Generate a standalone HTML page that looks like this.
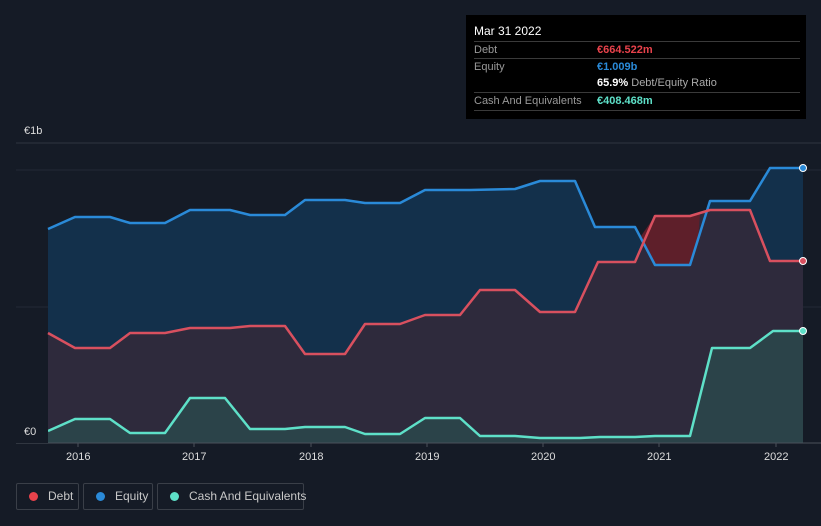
<!DOCTYPE html>
<html><head><style>
body{margin:0;width:821px;height:526px;background:#151b26;font-family:"Liberation Sans",sans-serif;overflow:hidden;position:relative}
.tt{position:absolute;left:466px;top:15px;width:340px;height:104px;background:#000;color:#fff;font-size:11px}
.row{position:absolute;left:8px;width:326px;border-top:1px solid #3a3a3a;height:17px;line-height:17px}
.l{color:#999;position:absolute;left:0}
.v{position:absolute;left:123px;font-weight:bold}
.leg{position:absolute;top:483px;height:27px;border:1px solid #3a3f48;border-radius:2px;color:#c8c8c8;font-size:12px;line-height:25px;box-sizing:border-box;white-space:nowrap}
.leg i{display:inline-block;width:9px;height:9px;border-radius:50%;margin:0 10px 0 12px;vertical-align:-1px}
.ax{position:absolute;top:451px;color:#ddd;font-size:11px}
</style></head><body>
<svg width="821" height="526" style="position:absolute;left:0;top:0">
<line x1="16" y1="143" x2="821" y2="143" stroke="#2f3540"/>
<line x1="16" y1="170" x2="821" y2="170" stroke="#242a35"/>
<line x1="16" y1="307" x2="821" y2="307" stroke="#242a35"/>
<polygon fill="#13304b" points="48,229 75,217 110,217 130,223 165,223 190,210 230,210 250,215 285,215 305,200 345,200 365,203 400,203 425,190 470,190 515,189 540,181 575,181 595,227 635,227 655,265 690,265 710,201 750,201 770,168 803,168 803,443 48,443"/>
<polygon fill="#2e2a3c" points="48,333 75,348 110,348 130,333 165,333 190,328 230,328 250,326 285,326 305,354 345,354 365,324 400,324 425,315 460,315 480,290 515,290 540,312 575,312 598,262 635,262 655,216 690,216 710,210 750,210 770,261 803,261 803,443 48,443"/>
<polygon fill="#5e1f2a" points="641,236 655,216 690,216 700,214 698,240 690,265 655,265"/>
<polygon fill="#2b4349" points="48,431 75,419 110,419 130,433 165,433 190,398 225,398 250,429 285,429 305,427 345,427 365,434 400,434 425,418 460,418 480,436 515,436 540,438 580,438 600,437 635,437 655,436 690,436 712,348 750,348 773,331 803,331 803,443 48,443"/>
<g fill="none" stroke-width="2.5" stroke-linejoin="round">
<polyline stroke="#2a8ad8" points="48,229 75,217 110,217 130,223 165,223 190,210 230,210 250,215 285,215 305,200 345,200 365,203 400,203 425,190 470,190 515,189 540,181 575,181 595,227 635,227 655,265 690,265 710,201 750,201 770,168 803,168"/>
<polyline stroke="#d8505f" points="48,333 75,348 110,348 130,333 165,333 190,328 230,328 250,326 285,326 305,354 345,354 365,324 400,324 425,315 460,315 480,290 515,290 540,312 575,312 598,262 635,262 655,216 690,216 710,210 750,210 770,261 803,261"/>
<polyline stroke="#5ee0c8" points="48,431 75,419 110,419 130,433 165,433 190,398 225,398 250,429 285,429 305,427 345,427 365,434 400,434 425,418 460,418 480,436 515,436 540,438 580,438 600,437 635,437 655,436 690,436 712,348 750,348 773,331 803,331"/>
</g>
<circle cx="803" cy="168" r="3.5" fill="#2a8ad8" stroke="#fff"/>
<circle cx="803" cy="261" r="3.5" fill="#d8505f" stroke="#fff"/>
<circle cx="803" cy="331" r="3.5" fill="#5ee0c8" stroke="#fff"/>
<line x1="16" y1="443" x2="821" y2="443" stroke="#4a505a"/>
<g stroke="#4a505a"><line x1="78" y1="443" x2="78" y2="447"/><line x1="194" y1="443" x2="194" y2="447"/><line x1="311" y1="443" x2="311" y2="447"/><line x1="427" y1="443" x2="427" y2="447"/><line x1="543" y1="443" x2="543" y2="447"/><line x1="659" y1="443" x2="659" y2="447"/><line x1="776" y1="443" x2="776" y2="447"/></g>
</svg>
<div style="position:absolute;left:16px;top:424px;width:32px;height:19px;background:#151b26"></div>
<div style="position:absolute;left:24px;top:125px;color:#ddd;font-size:11px">€1b</div>
<div style="position:absolute;left:24px;top:426px;color:#ddd;font-size:11px">€0</div>
<div class="ax" style="left:66px">2016</div><div class="ax" style="left:182px">2017</div><div class="ax" style="left:299px">2018</div><div class="ax" style="left:415px">2019</div><div class="ax" style="left:531px">2020</div><div class="ax" style="left:647px">2021</div><div class="ax" style="left:764px">2022</div>
<div class="tt">
<div style="position:absolute;left:8px;top:9px;font-size:12px">Mar 31 2022</div>
<div class="row" style="top:26px"><span class="l">Debt</span><span class="v" style="color:#e8424b">€664.522m</span></div>
<div class="row" style="top:43px"><span class="l">Equity</span><span class="v" style="color:#2a8ad8">€1.009b</span></div>
<div class="row" style="top:60px;border-top:none"><span class="v" style="color:#fff">65.9% <span style="color:#aaa;font-weight:normal">Debt/Equity Ratio</span></span></div>
<div class="row" style="top:77px"><span class="l">Cash And Equivalents</span><span class="v" style="color:#5ee0c8">€408.468m</span></div>
<div class="row" style="top:95px;height:0"></div>
</div>
<div class="leg" style="left:16px;width:63px"><i style="background:#e8424b"></i>Debt</div>
<div class="leg" style="left:83px;width:70px"><i style="background:#2a8ad8"></i>Equity</div>
<div class="leg" style="left:157px;width:147px"><i style="background:#5ee0c8"></i>Cash And Equivalents</div>
</body></html>
